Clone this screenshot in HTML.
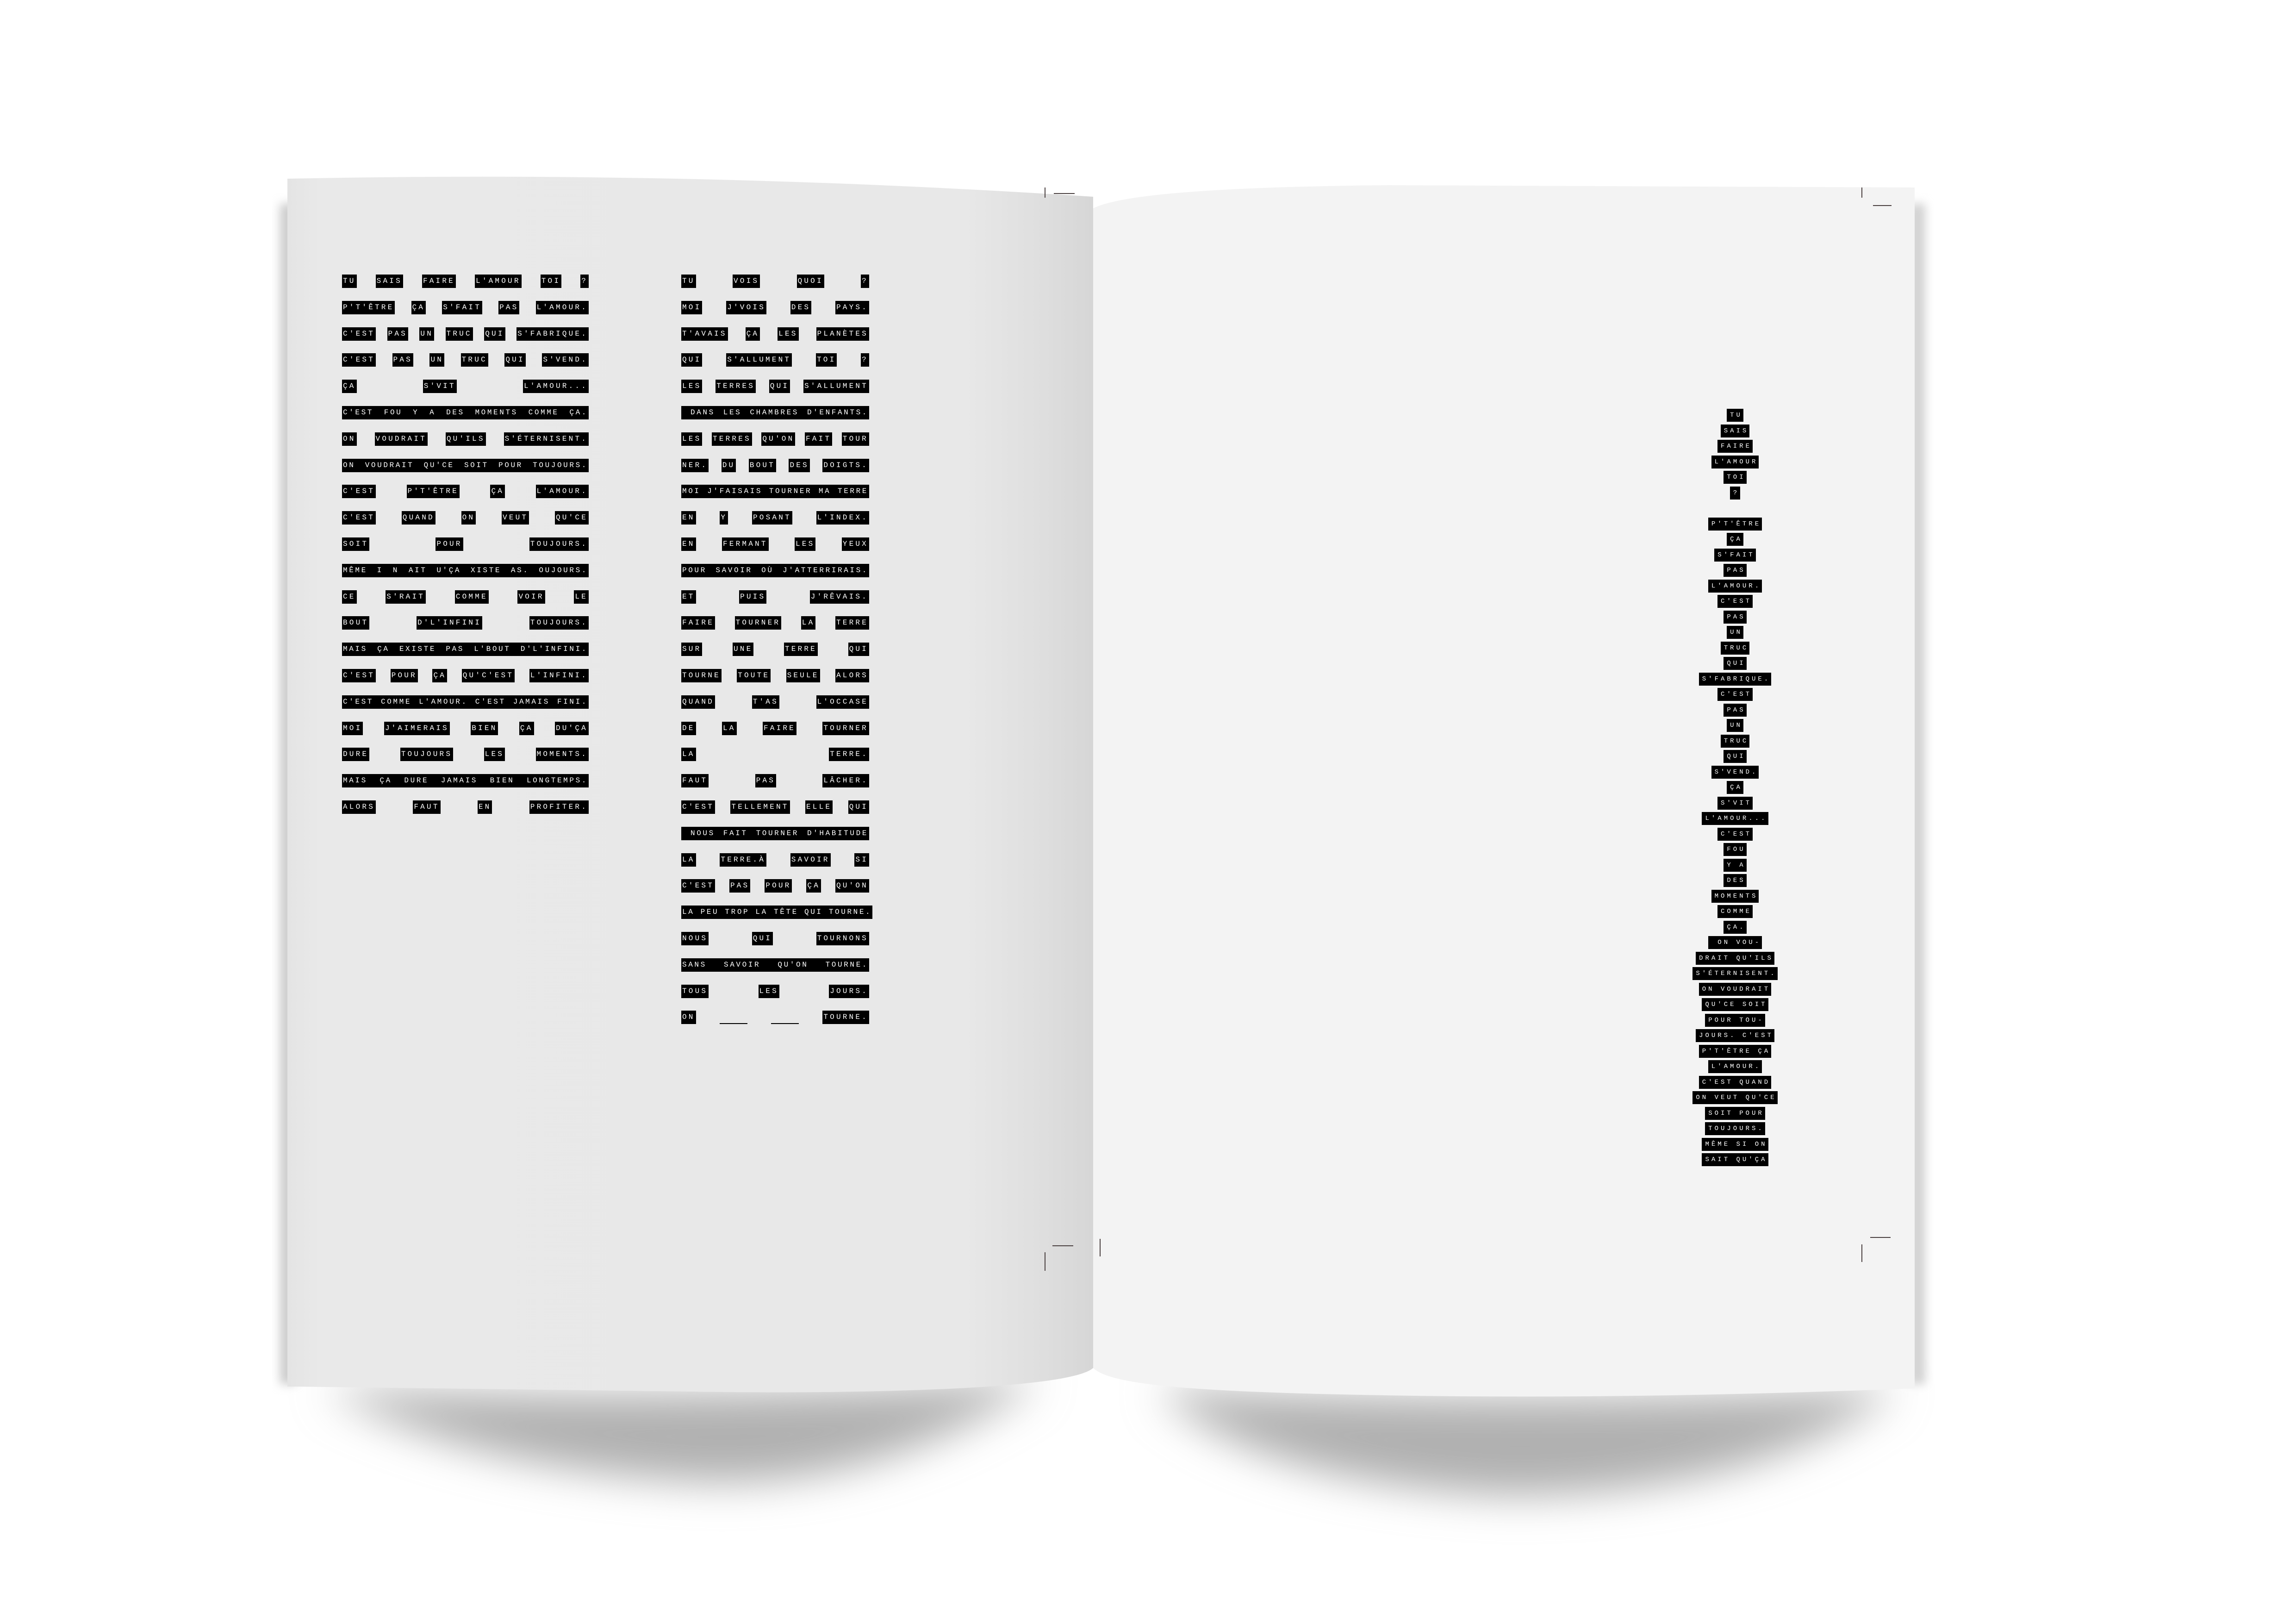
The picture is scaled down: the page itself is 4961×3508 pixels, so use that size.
<!DOCTYPE html>
<html><head><meta charset="utf-8">
<style>
html,body{margin:0;padding:0;background:#fff;}
body{width:4961px;height:3508px;position:relative;overflow:hidden;font-family:"Liberation Mono",monospace;}
svg.bg{position:absolute;left:0;top:0;}
.col{position:absolute;}
.col .l{display:flex;justify-content:space-between;height:29px;margin-bottom:27.8px;}
.col .l span{background:#000;color:#fff;font-size:16px;letter-spacing:4.2px;line-height:29px;height:29px;padding:0 2px;white-space:pre;}
.col .l.full span{flex:1;text-align:justify;text-align-last:justify;letter-spacing:3.6px;}
.r{position:absolute;left:3549px;top:883px;width:400px;text-align:center;}
.r div{height:28px;margin-bottom:5.5px;}
.r span{display:inline-block;background:#000;color:#fff;font-size:14px;letter-spacing:5px;line-height:28px;height:28px;padding:0 2px 0 7px;white-space:pre;}
.m{position:absolute;background:#4a4040;}
</style></head><body>
<svg class="bg" width="4961" height="3508" viewBox="0 0 4961 3508">
<defs>
<filter id="b1" x="-30%" y="-80%" width="160%" height="260%"><feGaussianBlur stdDeviation="45"/></filter>
<filter id="b2" x="-50%" y="-10%" width="200%" height="120%"><feGaussianBlur stdDeviation="10"/></filter>
<linearGradient id="lg" x1="0" x2="1" y1="0" y2="0">
<stop offset="0" stop-color="#e4e4e4"/><stop offset="0.04" stop-color="#e9e9e9"/><stop offset="0.84" stop-color="#e8e8e8"/><stop offset="0.94" stop-color="#dedede"/><stop offset="1" stop-color="#d6d6d6"/>
</linearGradient>
</defs>
<path d="M700 3000 Q1500 3030 2250 2980 Q1900 3220 1500 3200 Q1000 3170 700 3000 Z" fill="#b0b0b0" filter="url(#b1)"/>
<path d="M2500 3000 Q3300 3040 4100 3000 Q3800 3230 3250 3230 Q2700 3200 2500 3000 Z" fill="#b0b0b0" filter="url(#b1)"/>
<path d="M605 440 L605 2990 L640 2990 L640 440 Z" fill="#cccccc" filter="url(#b2)"/>
<path d="M4125 440 L4125 2990 L4160 2990 L4160 440 Z" fill="#d2d2d2" filter="url(#b2)"/>
<path d="M621 386 Q1500 368 2362 425 L2362 2955 C2300 3010 1700 3010 1500 3006 L621 2995 Z" fill="url(#lg)"/>
<path d="M2362 450 Q2450 405 3000 400 L4137 405 L4137 2999 Q3600 3020 3146 3016 C2550 3010 2400 2990 2362 2955 Z" fill="#f3f3f3"/>
</svg>

<div class="m" style="left:2277px;top:417px;width:45px;height:2px"></div>
<div class="m" style="left:2257px;top:405px;width:2px;height:22px"></div>
<div class="m" style="left:2274px;top:2690px;width:45px;height:2px"></div>
<div class="m" style="left:2257px;top:2705px;width:2px;height:40px"></div>
<div class="m" style="left:2376px;top:2676px;width:2px;height:38px"></div>
<div class="m" style="left:4047px;top:443px;width:40px;height:2px"></div>
<div class="m" style="left:4022px;top:405px;width:2px;height:22px"></div>
<div class="m" style="left:4041px;top:2672px;width:44px;height:2px"></div>
<div class="m" style="left:4022px;top:2688px;width:2px;height:38px"></div>

<div class="col" style="left:739px;top:593px;width:533px;">
<div class="l"><span>TU</span><span>SAIS</span><span>FAIRE</span><span>L'AMOUR</span><span>TOI</span><span>?</span></div>
<div class="l"><span>P'T'ÊTRE</span><span>ÇA</span><span>S'FAIT</span><span>PAS</span><span>L'AMOUR.</span></div>
<div class="l"><span>C'EST</span><span>PAS</span><span>UN</span><span>TRUC</span><span>QUI</span><span>S'FABRIQUE.</span></div>
<div class="l"><span>C'EST</span><span>PAS</span><span>UN</span><span>TRUC</span><span>QUI</span><span>S'VEND.</span></div>
<div class="l"><span>ÇA</span><span>S'VIT</span><span>L'AMOUR...</span></div>
<div class="l full"><span>C'EST FOU Y A DES MOMENTS COMME ÇA.</span></div>
<div class="l"><span>ON</span><span>VOUDRAIT</span><span>QU'ILS</span><span>S'ÉTERNISENT.</span></div>
<div class="l full"><span>ON VOUDRAIT QU'CE SOIT POUR TOUJOURS.</span></div>
<div class="l"><span>C'EST</span><span>P'T'ÊTRE</span><span>ÇA</span><span>L'AMOUR.</span></div>
<div class="l"><span>C'EST</span><span>QUAND</span><span>ON</span><span>VEUT</span><span>QU'CE</span></div>
<div class="l"><span>SOIT</span><span>POUR</span><span>TOUJOURS.</span></div>
<div class="l full"><span>MÊME I N AIT U'ÇA XISTE AS. OUJOURS.</span></div>
<div class="l"><span>CE</span><span>S'RAIT</span><span>COMME</span><span>VOIR</span><span>LE</span></div>
<div class="l"><span>BOUT</span><span>D'L'INFINI</span><span>TOUJOURS.</span></div>
<div class="l full"><span>MAIS ÇA EXISTE PAS L'BOUT D'L'INFINI.</span></div>
<div class="l"><span>C'EST</span><span>POUR</span><span>ÇA</span><span>QU'C'EST</span><span>L'INFINI.</span></div>
<div class="l full"><span>C'EST COMME L'AMOUR. C'EST JAMAIS FINI.</span></div>
<div class="l"><span>MOI</span><span>J'AIMERAIS</span><span>BIEN</span><span>ÇA</span><span>DU'ÇA</span></div>
<div class="l"><span>DURE</span><span>TOUJOURS</span><span>LES</span><span>MOMENTS.</span></div>
<div class="l full"><span>MAIS ÇA DURE JAMAIS BIEN LONGTEMPS.</span></div>
<div class="l"><span>ALORS</span><span>FAUT</span><span>EN</span><span>PROFITER.</span></div>
</div>

<div class="col" style="left:1472px;top:593px;width:406px;">
<div class="l"><span>TU</span><span>VOIS</span><span>QUOI</span><span>?</span></div>
<div class="l"><span>MOI</span><span>J'VOIS</span><span>DES</span><span>PAYS.</span></div>
<div class="l"><span>T'AVAIS</span><span>ÇA</span><span>LES</span><span>PLANÈTES</span></div>
<div class="l"><span>QUI</span><span>S'ALLUMENT</span><span>TOI</span><span>?</span></div>
<div class="l"><span>LES</span><span>TERRES</span><span>QUI</span><span>S'ALLUMENT</span></div>
<div class="l full"><span> DANS LES CHAMBRES D'ENFANTS.</span></div>
<div class="l"><span>LES</span><span>TERRES</span><span>QU'ON</span><span>FAIT</span><span>TOUR</span></div>
<div class="l"><span>NER.</span><span>DU</span><span>BOUT</span><span>DES</span><span>DOIGTS.</span></div>
<div class="l full"><span>MOI J'FAISAIS TOURNER MA TERRE</span></div>
<div class="l"><span>EN</span><span>Y</span><span>POSANT</span><span>L'INDEX.</span></div>
<div class="l"><span>EN</span><span>FERMANT</span><span>LES</span><span>YEUX</span></div>
<div class="l full"><span>POUR SAVOIR OÙ J'ATTERRIRAIS.</span></div>
<div class="l"><span>ET</span><span>PUIS</span><span>J'RÊVAIS.</span></div>
<div class="l"><span>FAIRE</span><span>TOURNER</span><span>LA</span><span>TERRE</span></div>
<div class="l"><span>SUR</span><span>UNE</span><span>TERRE</span><span>QUI</span></div>
<div class="l"><span>TOURNE</span><span>TOUTE</span><span>SEULE</span><span>ALORS</span></div>
<div class="l"><span>QUAND</span><span>T'AS</span><span>L'OCCASE</span></div>
<div class="l"><span>DE</span><span>LA</span><span>FAIRE</span><span>TOURNER</span></div>
<div class="l"><span>LA</span><span>TERRE.</span></div>
<div class="l"><span>FAUT</span><span>PAS</span><span>LÂCHER.</span></div>
<div class="l"><span>C'EST</span><span>TELLEMENT</span><span>ELLE</span><span>QUI</span></div>
<div class="l full"><span> NOUS FAIT TOURNER D'HABITUDE</span></div>
<div class="l"><span>LA</span><span>TERRE.À</span><span>SAVOIR</span><span>SI</span></div>
<div class="l"><span>C'EST</span><span>PAS</span><span>POUR</span><span>ÇA</span><span>QU'ON</span></div>
<div class="l full"><span>LA PEU TROP LA TÊTE QUI TOURNE.</span></div>
<div class="l"><span>NOUS</span><span>QUI</span><span>TOURNONS</span></div>
<div class="l full"><span>SANS SAVOIR QU'ON TOURNE.</span></div>
<div class="l"><span>TOUS</span><span>LES</span><span>JOURS.</span></div>
<div class="l"><span>ON</span><span style="background:none;border-bottom:2px solid #000;height:27px">    </span><span style="background:none;border-bottom:2px solid #000;height:27px">    </span><span>TOURNE.</span></div>
</div>

<div class="r">
<div><span>TU</span></div><div><span>SAIS</span></div><div><span>FAIRE</span></div><div><span>L'AMOUR</span></div><div><span>TOI</span></div><div><span>?</span></div>
<div></div>
<div><span>P'T'ÊTRE</span></div><div><span>ÇA</span></div><div><span>S'FAIT</span></div><div><span>PAS</span></div><div><span>L'AMOUR.</span></div><div><span>C'EST</span></div><div><span>PAS</span></div><div><span>UN</span></div><div><span>TRUC</span></div><div><span>QUI</span></div><div><span>S'FABRIQUE.</span></div><div><span>C'EST</span></div><div><span>PAS</span></div><div><span>UN</span></div><div><span>TRUC</span></div><div><span>QUI</span></div><div><span>S'VEND.</span></div><div><span>ÇA</span></div><div><span>S'VIT</span></div><div><span>L'AMOUR...</span></div><div><span>C'EST</span></div><div><span>FOU</span></div><div><span>Y A</span></div><div><span>DES</span></div><div><span>MOMENTS</span></div><div><span>COMME</span></div><div><span>ÇA.</span></div><div><span> ON VOU-</span></div><div><span>DRAIT QU'ILS</span></div><div><span>S'ÉTERNISENT.</span></div><div><span>ON VOUDRAIT</span></div><div><span>QU'CE SOIT</span></div><div><span>POUR TOU-</span></div><div><span>JOURS. C'EST</span></div><div><span>P'T'ÊTRE ÇA</span></div><div><span>L'AMOUR.</span></div><div><span>C'EST QUAND</span></div><div><span>ON VEUT QU'CE</span></div><div><span>SOIT POUR</span></div><div><span>TOUJOURS.</span></div><div><span>MÊME SI ON</span></div><div><span>SAIT QU'ÇA</span></div>
</div>
</body></html>
